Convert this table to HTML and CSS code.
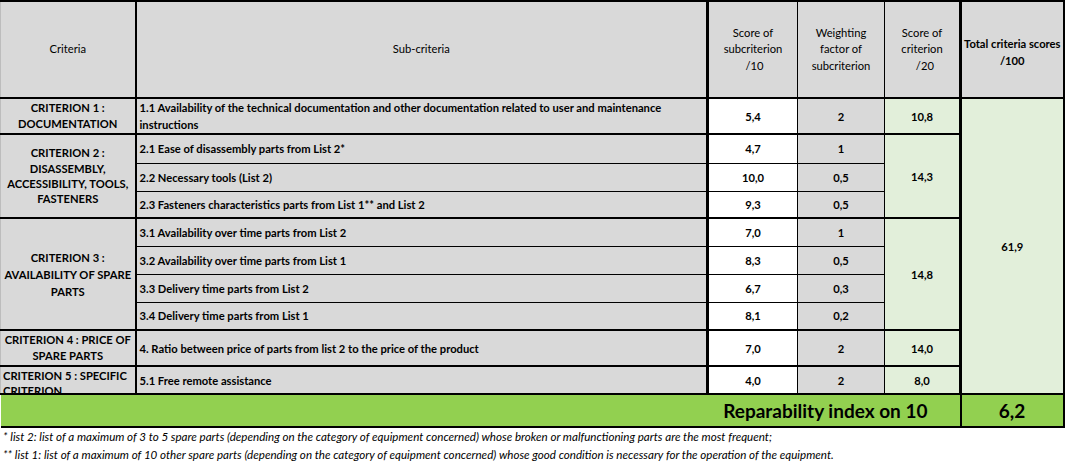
FILE: index.html
```html
<!DOCTYPE html>
<html lang="en">
<head>
<meta charset="utf-8">
<title>Reparability index</title>
<link rel="stylesheet" href="styles.css">
</head>
<body>
<table class="grid">
  <colgroup>
    <col class="c-crit">
    <col class="c-sub">
    <col class="c-score">
    <col class="c-weight">
    <col class="c-cscore">
    <col class="c-total">
  </colgroup>
  <thead>
    <tr class="head">
      <th class="h-crit">Criteria</th>
      <th class="h-sub">Sub-criteria</th>
      <th class="h-score">Score of<br>subcriterion<br>&nbsp;/10</th>
      <th class="h-weight">Weighting<br>factor of<br>subcriterion</th>
      <th class="h-cscore">Score of<br>criterion<br>&nbsp;&nbsp;/20</th>
      <th class="h-total">Total criteria scores<br>/100</th>
    </tr>
  </thead>
  <tbody>
    <tr class="grp r1">
      <td class="crit">CRITERION 1 :<br>DOCUMENTATION</td>
      <td class="sub">1.1 Availability of the technical documentation and other documentation related to user and maintenance instructions</td>
      <td class="score">5,4</td>
      <td class="weight">2</td>
      <td class="cscore">10,8</td>
      <td class="total" rowspan="10">61,9</td>
    </tr>
    <tr class="grp r2a">
      <td class="crit crit2" rowspan="3">CRITERION 2 :<br>DISASSEMBLY,<br>ACCESSIBILITY, TOOLS,<br>FASTENERS</td>
      <td class="sub">2.1 Ease of disassembly parts from List 2*</td>
      <td class="score">4,7</td>
      <td class="weight">1</td>
      <td class="cscore" rowspan="3">14,3</td>
    </tr>
    <tr class="dot r2b">
      <td class="sub">2.2 Necessary tools (List 2)</td>
      <td class="score">10,0</td>
      <td class="weight">0,5</td>
    </tr>
    <tr class="dot r2c">
      <td class="sub">2.3 Fasteners characteristics parts from List 1** and List 2</td>
      <td class="score">9,3</td>
      <td class="weight">0,5</td>
    </tr>
    <tr class="grp r3">
      <td class="crit crit3" rowspan="4">CRITERION 3 :<br>AVAILABILITY OF SPARE<br>PARTS</td>
      <td class="sub">3.1 Availability over time parts from List 2</td>
      <td class="score">7,0</td>
      <td class="weight">1</td>
      <td class="cscore" rowspan="4">14,8</td>
    </tr>
    <tr class="dot r3">
      <td class="sub">3.2 Availability over time parts from List 1</td>
      <td class="score">8,3</td>
      <td class="weight">0,5</td>
    </tr>
    <tr class="dot r3">
      <td class="sub">3.3 Delivery time parts from List 2</td>
      <td class="score">6,7</td>
      <td class="weight">0,3</td>
    </tr>
    <tr class="dot r3">
      <td class="sub">3.4 Delivery time parts from List 1</td>
      <td class="score">8,1</td>
      <td class="weight">0,2</td>
    </tr>
    <tr class="grp r4">
      <td class="crit">CRITERION 4 : PRICE OF<br>SPARE PARTS</td>
      <td class="sub">4. Ratio between price of parts from list 2 to the price of the product</td>
      <td class="score">7,0</td>
      <td class="weight">2</td>
      <td class="cscore">14,0</td>
    </tr>
    <tr class="grp r5">
      <td class="crit crit5"><div class="clip">CRITERION 5 : SPECIFIC CRITERION</div></td>
      <td class="sub">5.1 Free remote assistance</td>
      <td class="score">4,0</td>
      <td class="weight">2</td>
      <td class="cscore">8,0</td>
    </tr>
    <tr class="index">
      <td class="label" colspan="5">Reparability index on 10</td>
      <td class="value">6,2</td>
    </tr>
  </tbody>
</table>
<div class="notes">
  <p>* list 2: list of a maximum of 3 to 5 spare parts (depending on the category of equipment concerned) whose broken or malfunctioning parts are the most frequent;</p>
  <p>** list 1: list of a maximum of 10 other spare parts (depending on the category of equipment concerned) whose good condition is necessary for the operation of the equipment.</p>
</div>
</body>
</html>
```

FILE: styles.css
```css
html, body {
  margin: 0;
  padding: 0;
  background: #ffffff;
}

body {
  font-family: Lato, "Liberation Sans", sans-serif;
  color: #000;
}

.grid {
  border-collapse: collapse;
  table-layout: fixed;
  width: 1063px;
  font-size: 11.2px;
}

.c-crit { width: 135px; }
.c-sub { width: 572px; }
.c-score { width: 90px; }
.c-weight { width: 87px; }
.c-cscore { width: 76px; }
.c-total { width: 103px; }

.grid th,
.grid td {
  padding: 0 2px;
  overflow: hidden;
  border: 1px solid #000;
}

/* header */
.head { height: 97px; }
.head th {
  background: #d9d9d9;
  font-weight: normal;
  text-align: center;
  vertical-align: middle;
  line-height: 16.5px;
  border-top: 2px solid #000;
}
.head .h-crit { border-left: 1px solid #bdbdbd; border-right: 2px solid #000; }
.head .h-sub { border-right: 3px solid #000; }
.head .h-cscore { border-right: 3px solid #000; }
.head .h-total {
  font-weight: bold;
  border-right: 2px solid #000;
  padding-top: 6px;
}

/* body cells */
.crit {
  background: #d9d9d9;
  font-weight: bold;
  text-align: center;
  vertical-align: middle;
  line-height: 16px;
  border-left: 1px solid #bdbdbd !important;
  border-right: 2px solid #000 !important;
}
.crit2 { line-height: 15.3px; }
.crit3 { line-height: 17px; }

.sub {
  background: #d9d9d9;
  font-weight: bold;
  text-align: left;
  vertical-align: middle;
  line-height: 17px;
  padding-left: 3px !important;
  border-right: 3px solid #000 !important;
}
.score {
  background: #ffffff;
  font-weight: bold;
  text-align: center;
}
.weight {
  background: #d9d9d9;
  font-weight: bold;
  text-align: center;
}
.cscore {
  background: #e2efda;
  font-weight: bold;
  text-align: center;
  border-right: 3px solid #000 !important;
}
.total {
  background: #e2efda;
  font-weight: bold;
  text-align: center;
  vertical-align: middle;
  border-right: 2px solid #000 !important;
}

/* row groups */
.grp td { border-top: 2px solid #000; }
.dot td { border-top: 1px dotted #000; }

.r1 { height: 36px; }
.r2a { height: 29px; }
.r2b { height: 28px; }
.r2c { height: 27px; }
.r3 { height: 28px; }
.r4 { height: 36px; }
.r5 { height: 27px; }

.crit5 {
  text-align: left;
  vertical-align: top;
  padding: 0 2px !important;
}
.clip {
  height: 25px;
  overflow: hidden;
  line-height: 15px;
  padding-top: 1px;
}

/* reparability index row */
.index { height: 33px; }
.index td {
  background: #92d050;
  font-weight: bold;
  font-size: 19px;
  border-top: 2px solid #000;
  border-bottom: 2px solid #000;
  border-left: 0;
}
.index .label {
  text-align: right;
  padding-right: 32px;
  border-right: 2px solid #000;
}
.index .value {
  text-align: center;
  border-right: 2px solid #000;
}

/* footnotes */
.notes {
  padding: 0 0 0 3px;
  font-size: 11.6px;
  font-style: italic;
}
.notes p {
  margin: 0;
  line-height: 18px;
}
```
